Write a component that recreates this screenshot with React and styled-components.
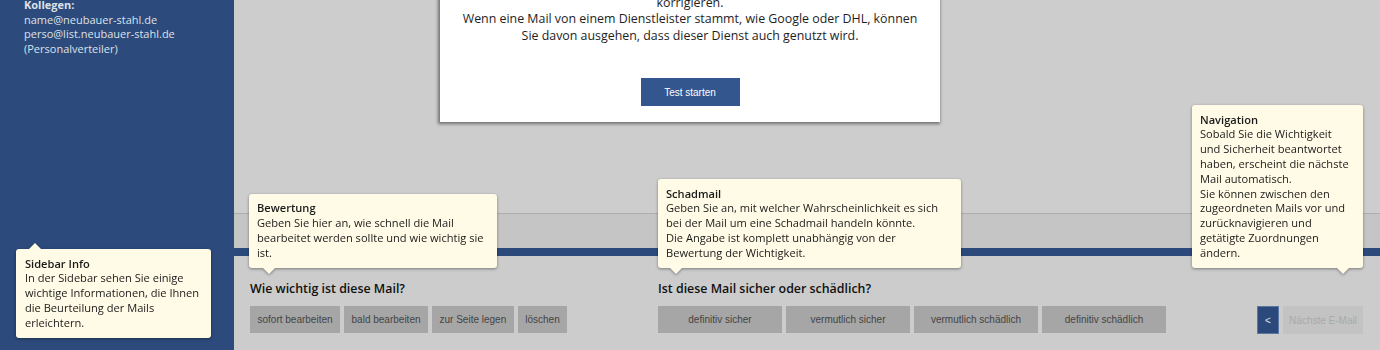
import React from "react";
import styled, { createGlobalStyle } from "styled-components";

const GlobalStyle = createGlobalStyle`
  html, body { margin: 0; padding: 0; overflow: hidden; }
  body { font-family: "Open Sans", "Noto Sans", sans-serif; background: #cccccc; }
  * { box-sizing: border-box; }
`;

const Page = styled.div`
  position: relative;
  display: flex;
  width: 1380px;
  height: 350px;
  overflow: hidden;
`;

const Sidebar = styled.aside`
  flex: 0 0 234px;
  background: #2c4a7b;
  color: #dde1e8;
  padding: 0 0 0 24px;
  font-size: 11px;
  line-height: 14.6px;
`;

const SideBlock = styled.div`
  margin-top: -2px;
`;

const SideLabel = styled.div`
  font-weight: 700;
`;

const Main = styled.main`
  flex: 1;
  display: flex;
  flex-direction: column;
  background: #cccccc;
`;

const Upper = styled.div`
  height: 214px;
  background: #cdcdcd;
  border-bottom: 1px solid #adadad;
`;

const Band = styled.div`
  height: 34px;
  background: #c5c5c5;
`;

const BlueBar = styled.div`
  height: 8px;
  background: #2b4a7b;
`;

const Controls = styled.div`
  flex: 1;
  display: flex;
  align-items: flex-start;
  padding: 24px 17px 0 16px;
`;

const Group = styled.section`
  flex: 0 0 ${(p) => p.$width || "auto"};
  display: flex;
  flex-direction: column;
`;

const Heading = styled.h2`
  margin: 0 0 9px;
  font-size: 12.4px;
  line-height: 17px;
  font-weight: 600;
  color: #111;
`;

const ButtonRow = styled.div`
  display: flex;
  gap: 4px;
`;

const ChoiceButton = styled.button`
  height: 27px;
  width: ${(p) => (p.$width ? `${p.$width}px` : "auto")};
  padding: 0 7.5px;
  border: none;
  background: #a6a6a6;
  color: #444444;
  font-family: "Liberation Sans", Arial, sans-serif;
  font-size: 10px;
  white-space: nowrap;
`;

const Nav = styled.div`
  margin-left: auto;
  margin-top: 26px;
  display: flex;
  gap: 4px;
`;

const NavButton = styled.button`
  height: 28px;
  width: ${(p) => p.$width}px;
  padding: 0;
  border: ${(p) => (p.$primary ? "1px solid #5b76a1" : "none")};
  background: ${(p) => (p.$primary ? "#2b4a7b" : "#c3c3c3")};
  color: ${(p) => (p.$primary ? "#dfe5ef" : "#a9a9a9")};
  font-family: "Liberation Sans", Arial, sans-serif;
  font-size: 10px;
`;

const Modal = styled.div`
  position: absolute;
  left: 440px;
  bottom: 228px;
  width: 500px;
  background: #ffffff;
  box-shadow: -1px 1px 3px 1px rgba(0, 0, 0, 0.45);
  padding: 40px 20px 16px;
  display: flex;
  flex-direction: column;
  align-items: center;
`;

const ModalText = styled.p`
  margin: 0;
  text-align: center;
  font-size: 12.4px;
  line-height: 16.5px;
  color: #1e1e1e;
`;

const PrimaryButton = styled.button`
  margin-top: 34px;
  width: 99px;
  height: 28px;
  border: none;
  background: #34568e;
  color: #ffffff;
  font-family: "Liberation Sans", Arial, sans-serif;
  font-size: 10px;
`;

const Tip = styled.div`
  position: absolute;
  left: ${(p) => p.$left}px;
  ${(p) => (p.$top != null ? `top: ${p.$top}px;` : `bottom: ${p.$bottom}px;`)}
  width: ${(p) => p.$width}px;
  padding: 7.5px 8px 7.5px ${(p) => p.$padLeft || 8}px;
  background: #fffbe6;
  border-radius: 3px;
  filter: drop-shadow(0 1px 1.5px rgba(0, 0, 0, 0.4));
  font-size: 11.1px;
  line-height: 14.8px;
  color: #1a1a1a;
  white-space: nowrap;

  &::after {
    content: "";
    position: absolute;
    left: ${(p) => p.$arrow - 6}px;
    ${(p) =>
      p.$up
        ? `top: -6px; border-bottom: 6px solid #fffbe6;`
        : `bottom: -6px; border-top: 6px solid #fffbe6;`}
    border-left: 6px solid transparent;
    border-right: 6px solid transparent;
  }
`;

const TipTitle = styled.div`
  font-weight: 600;
`;

const tips = [
  {
    key: "sidebar",
    left: 16,
    top: 249,
    width: 195,
    arrow: 19,
    up: true,
    padLeft: 9,
    title: "Sidebar Info",
    lines: [
      "In der Sidebar sehen Sie einige",
      "wichtige Informationen, die Ihnen",
      "die Beurteilung der Mails",
      "erleichtern.",
    ],
  },
  {
    key: "bewertung",
    left: 249,
    bottom: 82,
    width: 248,
    arrow: 20,
    title: "Bewertung",
    lines: [
      "Geben Sie hier an, wie schnell die Mail",
      "bearbeitet werden sollte und wie wichtig sie",
      "ist.",
    ],
  },
  {
    key: "schadmail",
    left: 658,
    bottom: 82,
    width: 303,
    arrow: 18,
    title: "Schadmail",
    lines: [
      "Geben Sie an, mit welcher Wahrscheinlichkeit es sich",
      "bei der Mail um eine Schadmail handeln könnte.",
      "Die Angabe ist komplett unabhängig von der",
      "Bewertung der Wichtigkeit.",
    ],
  },
  {
    key: "navigation",
    left: 1192,
    bottom: 82,
    width: 171,
    arrow: 151,
    title: "Navigation",
    lines: [
      "Sobald Sie die Wichtigkeit",
      "und Sicherheit beantwortet",
      "haben, erscheint die nächste",
      "Mail automatisch.",
      "Sie können zwischen den",
      "zugeordneten Mails vor und",
      "zurücknavigieren und",
      "getätigte Zuordnungen",
      "ändern.",
    ],
  },
];

const importance = ["sofort bearbeiten", "bald bearbeiten", "zur Seite legen", "löschen"];
const safety = ["definitiv sicher", "vermutlich sicher", "vermutlich schädlich", "definitiv schädlich"];

export default function App() {
  return (
    <>
      <GlobalStyle />
      <Page>
        <Sidebar>
          <SideBlock>
            <SideLabel>Kollegen:</SideLabel>
            <div>name@neubauer-stahl.de</div>
            <div>perso@list.neubauer-stahl.de</div>
            <div>(Personalverteiler)</div>
          </SideBlock>
        </Sidebar>
        <Main>
          <Upper />
          <Band />
          <BlueBar />
          <Controls>
            <Group $width="408px">
              <Heading>Wie wichtig ist diese Mail?</Heading>
              <ButtonRow>
                {importance.map((t) => (
                  <ChoiceButton key={t}>{t}</ChoiceButton>
                ))}
              </ButtonRow>
            </Group>
            <Group>
              <Heading>Ist diese Mail sicher oder schädlich?</Heading>
              <ButtonRow>
                {safety.map((t) => (
                  <ChoiceButton key={t} $width={124}>
                    {t}
                  </ChoiceButton>
                ))}
              </ButtonRow>
            </Group>
            <Nav>
              <NavButton $primary $width={22}>&lt;</NavButton>
              <NavButton $width={80}>Nächste E-Mail</NavButton>
            </Nav>
          </Controls>
        </Main>

        <Modal>
          <ModalText>
            Sollten Sie sich bei einer Zuordnung unsicher sein, können Sie diese später noch
            <br />
            korrigieren.
            <br />
            Wenn eine Mail von einem Dienstleister stammt, wie Google oder DHL, können
            <br />
            Sie davon ausgehen, dass dieser Dienst auch genutzt wird.
          </ModalText>
          <PrimaryButton>Test starten</PrimaryButton>
        </Modal>

        {tips.map((t) => (
          <Tip
            key={t.key}
            $left={t.left}
            $top={t.top}
            $bottom={t.bottom}
            $width={t.width}
            $arrow={t.arrow}
            $up={t.up}
            $padLeft={t.padLeft}
          >
            <TipTitle>{t.title}</TipTitle>
            {t.lines.map((l, i) => (
              <div key={i}>{l}</div>
            ))}
          </Tip>
        ))}
      </Page>
    </>
  );
}
